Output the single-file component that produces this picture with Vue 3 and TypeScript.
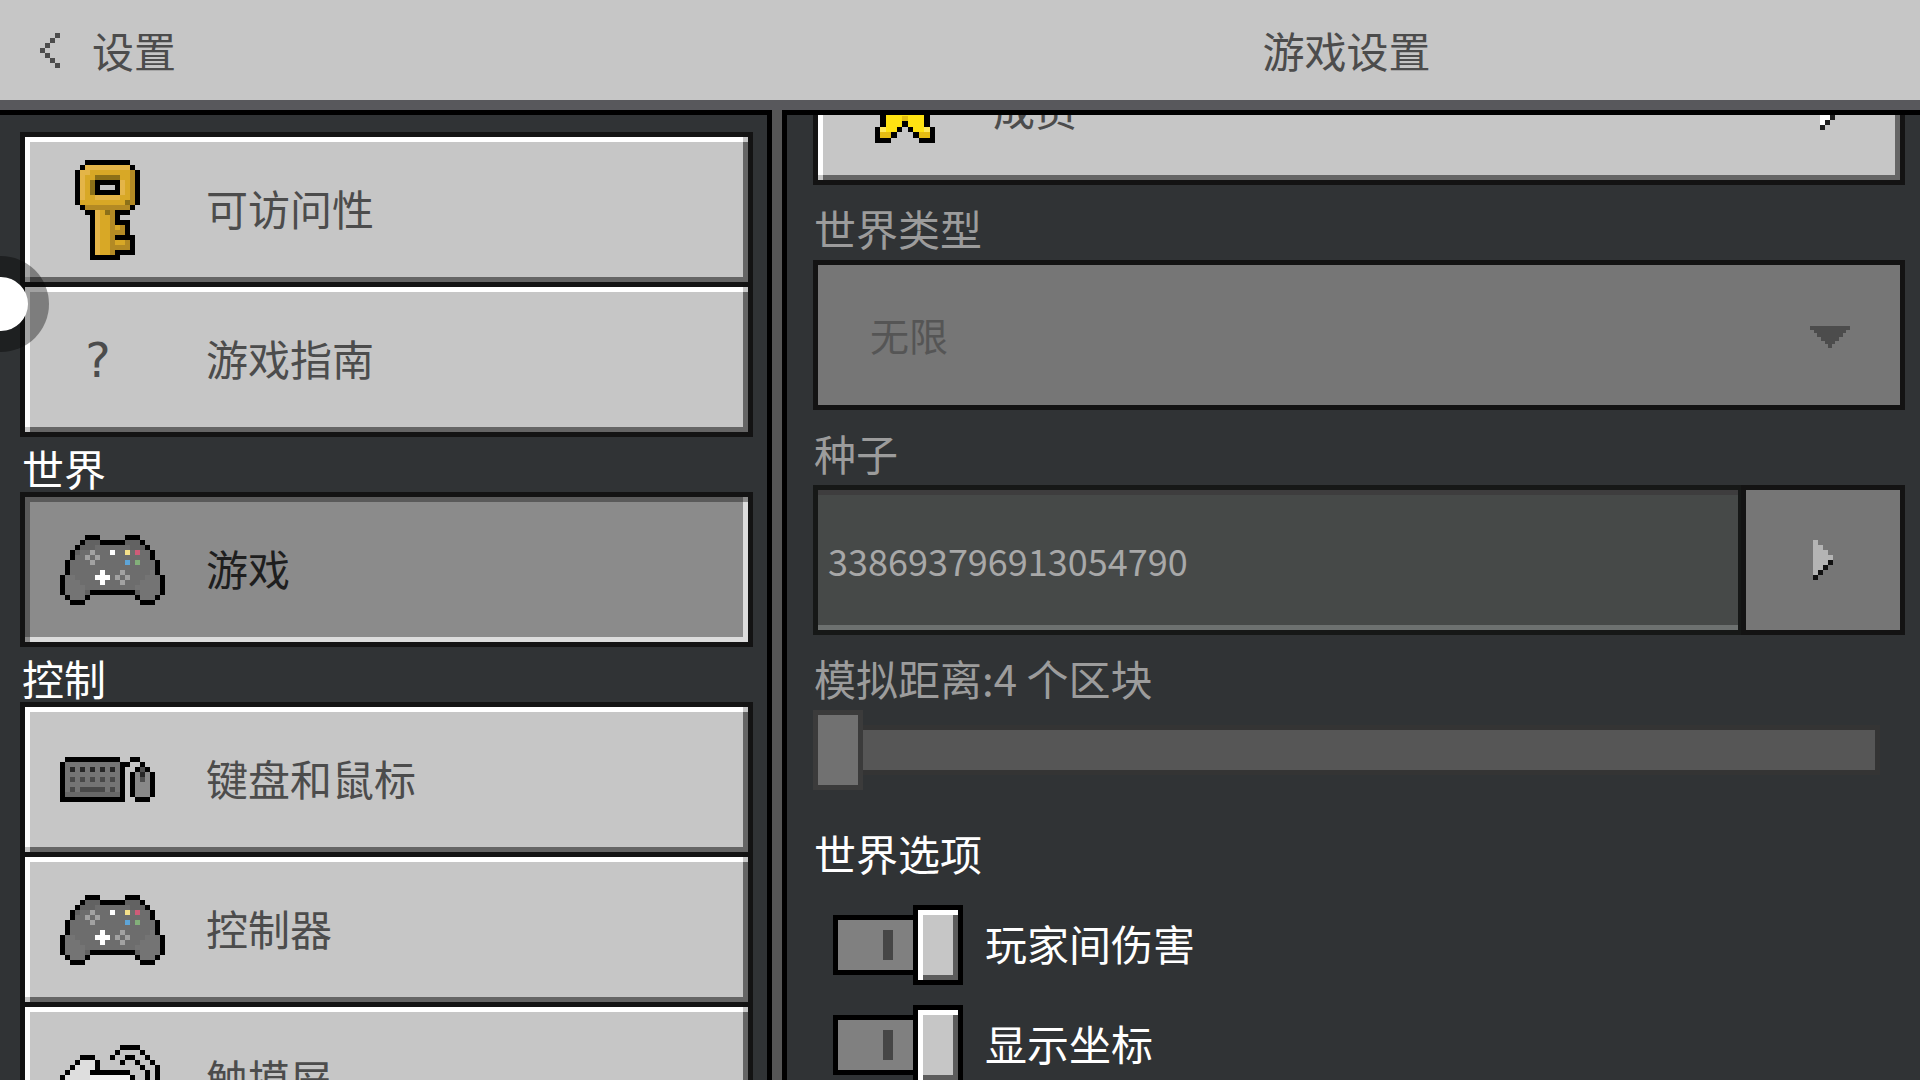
<script setup lang="ts">
import { ref } from 'vue'

interface Pixel { x: number; y: number; fill: string }
interface Sprite { width: number; height: number; pixels: Pixel[] }
interface MenuItem { label: string; icon?: Sprite; glyph?: string; selected?: boolean }
interface MenuGroup { title?: string; items: MenuItem[] }
interface Option { id: string; label: string; on: boolean }

// Builds a sprite from rows of palette letters; a dot is a clear pixel.
function sprite(rows: string[], palette: Record<string, string>): Sprite {
  const pixels: Pixel[] = []
  rows.forEach((row, y) => {
    ;[...row].forEach((c, x) => {
      if (palette[c]) pixels.push({ x, y, fill: palette[c] })
    })
  })
  return { width: Math.max(...rows.map(r => r.length)), height: rows.length, pixels }
}

const key = sprite([
  '.....KKKKKKKKK..',
  '....KLLLLLLLLLK.',
  '...KLLGGGGGGGGDK',
  '...KLGGBBBBBGGDK',
  '...KLGBKKKKKLGDK',
  '...KLGBK...KLGDK',
  '...KLGBKKKKKLGDK',
  '...KLGGLLLLLGGDK',
  '...KGGGGGGGGGBDK',
  '....KDDDDDDDDDK.',
  '.....KKLGBDKKK..',
  '......KLGGDK....',
  '......KLGGDKKK..',
  '......KLGGDGDK..',
  '......KLGGDDDK..',
  '......KLGGDKKKK.',
  '......KLGGDGGDK.',
  '......KLGGDDDDK.',
  '......KLGGDKKKK.',
  '......KKKKKK....',
], { K: '#000', L: '#e4b548', G: '#d8a826', D: '#b38a24', B: '#8c7018' })

const pad = sprite([
  '.....KKK.....KKK.....',
  '....KdddKKKKKdddK....',
  '...KdddgggggggdddK...',
  '..KdggagggWggYgRggK..',
  '..KggagaggggggggggK..',
  '.KggggaggggggBgGgggK.',
  '.KgggggggggggggggggK.',
  '.KggggggWgggagggggmK.',
  'KmmggggWWWgagagggmmmK',
  'KmmmggggWgggagggmmmmK',
  'KmmmmggggggggggmmmmmK',
  'KmmmmdKKKKKKKKKdmmmmK',
  '.KmmmK.........KmmmK.',
  '..KKK...........KKK..',
], {
  K: '#000', d: '#626262', g: '#6d6d6d', m: '#747474', a: '#a2a2a2', W: '#fff',
  Y: '#f5e08a', R: '#cf5c78', B: '#5ea5d8', G: '#83b07a',
})

const keyboard = sprite([
  '.KKKKKKKKKKK..KK...',
  'KgggggggggggKK..K..',
  'KgkgkgkgkgkgK..KdK.',
  'KgggggggggggK.KmkmK',
  'KgngngngngngK.KmdmK',
  'KgggggggggggK.KmmmK',
  'KgngnnnnngngK.KmmmK',
  'KhhhhhhhhhhhK.KmmmK',
  'KKKKKKKKKKKKK..KKK.',
], { K: '#000', g: '#747474', h: '#686868', k: '#262626', n: '#484848', m: '#888', d: '#4f4f4f' })

const touch = sprite([
  '............KKKK.....',
  '...........K....K....',
  '....KKK...K..KK..K...',
  '...KwwwK....K..K..K..',
  '..KwwwwK........K..K.',
  '.KwwwwKKKKKKKK...K.K.',
  'KwwwwwWWWWWWWWK..K.K.',
  'KwwwwwwwKKKKKK...K.K.',
  'KwwwwwwwwwwK.........',
  'KwwwwwwwwwwK.........',
  '.KwwwwwwwwK..........',
  '..KwwwwwwK...........',
  '...KKKKKK............',
  '.....................',
], { K: '#000', w: '#dedede', W: '#f2f2f2' })

const star = sprite([
  '....KKK....',
  '....KYK....',
  '...KYYYK...',
  'KKKKYYYKKKK',
  'KYYYYYYYYYK',
  '.KYYYYYYYK.',
  '.KYYYYYYYK.',
  '.KYYYDYYYK.',
  '.KYYYKYYYK.',
  'KLYYK.KYYLK',
  'KOOK...KOOK',
  'KKK.....KKK',
], { K: '#000', Y: '#ffe312', D: '#e3be12', L: '#ffe95c', O: '#e6bc12' })

const back = sprite(['...t', '..t.', '.t..', 't...', '.t..', '..t.', '...t'], { t: '#4c4c4c' })

const arrowRows = ['w...', 'ww..', 'www.', 'wwww', 'wwwk', 'wwk.', 'wk..', 'k...']
const arrow = sprite(arrowRows, { w: '#fff', k: '#1e1e1e' })
const arrowDim = sprite(arrowRows, { w: '#b4b4b4', k: '#111' })

const caret = sprite(
  ['ttttttttttt', '.ttttttttt.', '..ttttttt..', '...ttttt...', '....ttt....', '.....t.....'],
  { t: '#4c4c4c' },
)

const groups: MenuGroup[] = [
  { items: [{ label: '可访问性', icon: key }, { label: '游戏指南', glyph: '?' }] },
  { title: '世界', items: [{ label: '游戏', icon: pad, selected: true }] },
  {
    title: '控制',
    items: [
      { label: '键盘和鼠标', icon: keyboard },
      { label: '控制器', icon: pad },
      { label: '触摸屏', icon: touch },
    ],
  },
]

const seed = ref('338693796913054790')
const distance = ref(4)
const options = ref<Option[]>([
  { id: 'pvp', label: '玩家间伤害', on: true },
  { id: 'coordinates', label: '显示坐标', on: true },
])
</script>

<template>
  <div class="screen">
    <header class="topbar">
      <button class="back" type="button">
        <svg class="sprite" :width="back.width * 5" :height="back.height * 5" :viewBox="`0 0 ${back.width} ${back.height}`" aria-hidden="true">
          <rect v-for="(p, i) in back.pixels" :key="i" :x="p.x" :y="p.y" width="1" height="1" :fill="p.fill" />
        </svg>
        <span>设置</span>
      </button>
      <h1 class="title">游戏设置</h1>
    </header>

    <div class="body">
      <nav class="sidebar">
        <section v-for="(group, g) in groups" :key="g">
          <h2 v-if="group.title" class="group-title">{{ group.title }}</h2>
          <div class="frame">
            <button
              v-for="item in group.items"
              :key="item.label"
              type="button"
              class="item bevel"
              :class="{ selected: item.selected }"
            >
              <span class="icon">
                <svg
                  v-if="item.icon"
                  class="sprite"
                  :width="item.icon.width * 5"
                  :height="item.icon.height * 5"
                  :viewBox="`0 0 ${item.icon.width} ${item.icon.height}`"
                  aria-hidden="true"
                >
                  <rect v-for="(p, i) in item.icon.pixels" :key="i" :x="p.x" :y="p.y" width="1" height="1" :fill="p.fill" />
                </svg>
                <span v-else class="glyph">{{ item.glyph }}</span>
              </span>
              <span class="name">{{ item.label }}</span>
            </button>
          </div>
        </section>
      </nav>

      <div class="divider"></div>

      <main class="content">
        <div class="scrolled">
          <div class="frame">
            <button type="button" class="item bevel members">
              <svg class="sprite" width="60" height="65" :viewBox="`0 0 ${star.width} ${star.height}`" preserveAspectRatio="none" aria-hidden="true">
                <rect v-for="(p, i) in star.pixels" :key="i" :x="p.x" :y="p.y" width="1" height="1" :fill="p.fill" />
              </svg>
              <span class="name grow">成员</span>
              <svg class="sprite" width="20" height="40" viewBox="0 0 4 8" aria-hidden="true">
                <rect v-for="(p, i) in arrow.pixels" :key="i" :x="p.x" :y="p.y" width="1" height="1" :fill="p.fill" />
              </svg>
            </button>
          </div>

          <label class="label" for="world-type">世界类型</label>
          <div class="select-wrap">
            <select id="world-type" class="select" disabled>
              <option>无限</option>
            </select>
            <svg class="sprite caret" width="40" height="22" viewBox="0 0 11 6" preserveAspectRatio="none" aria-hidden="true">
              <rect v-for="(p, i) in caret.pixels" :key="i" :x="p.x" :y="p.y" width="1" height="1" :fill="p.fill" />
            </svg>
          </div>

          <label class="label" for="seed">种子</label>
          <div class="seed-row">
            <input id="seed" v-model="seed" class="seed" type="text" disabled />
            <button class="seed-button" type="button" disabled aria-labelledby="seed">
              <svg class="sprite" width="20" height="40" viewBox="0 0 4 8" aria-hidden="true">
                <rect v-for="(p, i) in arrowDim.pixels" :key="i" :x="p.x" :y="p.y" width="1" height="1" :fill="p.fill" />
              </svg>
            </button>
          </div>

          <label class="label" for="distance">模拟距离:{{ distance }} 个区块</label>
          <input id="distance" v-model.number="distance" class="slider" type="range" min="4" max="12" step="2" disabled />

          <h2 class="section-title">世界选项</h2>
          <div class="options">
            <div v-for="option in options" :key="option.id" class="option">
              <input :id="option.id" v-model="option.on" class="toggle" type="checkbox" />
              <label class="name" :for="option.id">{{ option.label }}</label>
            </div>
          </div>
        </div>
      </main>
    </div>

    <div class="touch-point"></div>
  </div>
</template>

<style>
html,
body {
  margin: 0;
  background: #303335;
}
</style>

<style scoped>
.screen {
  position: relative;
  display: flex;
  flex-direction: column;
  height: 100vh;
  overflow: hidden;
  background: #303335;
  color: #fff;
  font-family: 'Noto Sans CJK SC', sans-serif;
  font-size: 42px;
  line-height: 60px;
}

.screen * {
  box-sizing: border-box;
}

button,
input,
select {
  margin: 0;
  padding: 0;
  border: 0;
  border-radius: 0;
  font: inherit;
  color: inherit;
}

h1,
h2 {
  margin: 0;
  font-size: 42px;
  font-weight: 400;
}

.sprite {
  display: block;
  flex: none;
  shape-rendering: crispEdges;
}

.topbar {
  flex: none;
  display: grid;
  grid-template-columns: minmax(0, 787fr) minmax(0, 1133fr);
  align-items: center;
  height: 110px;
  border-bottom: 10px solid #58585c;
  background: #c6c6c6;
  color: #4c4c4c;
}

.back {
  display: flex;
  align-items: center;
  justify-self: start;
  gap: 32px;
  padding-left: 40px;
  background: none;
}

.title {
  padding-right: 14px;
  text-align: center;
}

.body {
  flex: 1;
  display: grid;
  grid-template-columns: minmax(0, 767fr) 20px minmax(0, 1133fr);
  min-height: 0;
}

.sidebar {
  padding: 17px 14px 0 20px;
  border-top: 5px solid #000;
  overflow: hidden;
}

.divider {
  border: solid #000;
  border-width: 0 5px;
  background: #565656;
}

.content {
  padding: 0 15px 0 26px;
  border-top: 5px solid #000;
  overflow: hidden;
}

/* The page is scrolled so that the first entry is partly hidden. */
.scrolled {
  margin-top: -85px;
}

.group-title {
  height: 55px;
  padding: 8px 0 0 2px;
  line-height: 45px;
}

.frame {
  display: grid;
  gap: 5px;
  padding: 5px;
  background: #131313;
}

.bevel {
  --face: #c6c6c6;
  --light: #fff;
  --shade: #656565;
  background:
    linear-gradient(var(--face), var(--face)) 0 100% / 5px 5px no-repeat,
    linear-gradient(var(--face), var(--face)) 100% 0 / 5px 5px no-repeat,
    linear-gradient(var(--light), var(--light)) 0 0 / 100% 5px no-repeat,
    linear-gradient(var(--light), var(--light)) 0 0 / 5px 100% no-repeat,
    linear-gradient(var(--shade), var(--shade)) 0 100% / 100% 5px no-repeat,
    linear-gradient(var(--shade), var(--shade)) 100% 0 / 5px 100% no-repeat,
    var(--face);
}

.item {
  display: flex;
  align-items: center;
  height: 145px;
  padding-left: 35px;
  color: #4c4c4c;
  text-align: left;
}

.item.selected {
  --face: #8b8b8b;
  --light: #5a5a5a;
  --shade: #dcdcdc;
  color: #1e1e1e;
}

.icon {
  flex: none;
  width: 146px;
}

.name {
  padding-bottom: 4px;
}

.glyph {
  display: block;
  width: 75px;
  font-family: 'DejaVu Sans Mono', monospace;
  font-size: 48px;
  text-align: center;
}

.members {
  gap: 58px;
  padding: 5px 60px 0 57px;
}

.grow {
  flex: 1;
}

.label {
  display: block;
  padding: 13px 0 2px 1px;
  color: #9c9c9c;
}

.select-wrap {
  position: relative;
}

.select {
  display: block;
  width: 100%;
  height: 150px;
  padding: 0 0 2px 52px;
  border: 5px solid #131313;
  appearance: none;
  background: #767676;
  color: #555;
  font-size: 39px;
  opacity: 1;
}

.caret {
  position: absolute;
  top: 66px;
  right: 55px;
}

.seed-row {
  display: flex;
  height: 150px;
}

.seed {
  flex: 1;
  min-width: 0;
  padding-left: 10px;
  border: 5px solid #161817;
  border-right-width: 3px;
  background: #464948;
  box-shadow: inset 0 5px #3e3d3e, inset 0 -5px #6d7170;
  color: #a8a8a8;
  font-size: 36px;
}

.seed-button {
  display: grid;
  place-items: center;
  width: 164px;
  border: 5px solid #131313;
  background: #767676;
}

.slider {
  display: block;
  width: calc(100% - 25px);
  height: 80px;
  appearance: none;
  background: none;
}

.slider::-webkit-slider-runnable-track {
  box-sizing: border-box;
  height: 50px;
  border: 5px solid #343434;
  border-left: 0;
  background: #565656;
}

.slider::-webkit-slider-thumb {
  box-sizing: border-box;
  width: 50px;
  height: 80px;
  margin-top: -20px;
  border: 5px solid #3b3b3b;
  appearance: none;
  background: #717171;
}

.section-title {
  padding: 33px 0 22px 1px;
}

.options {
  display: grid;
  gap: 20px;
  padding-left: 20px;
}

.option {
  display: flex;
  align-items: center;
  gap: 22px;
}

.toggle {
  display: flex;
  align-items: center;
  flex: none;
  width: 130px;
  height: 80px;
  appearance: none;
}

.toggle::before {
  content: '';
  box-sizing: border-box;
  width: 80px;
  height: 60px;
  border: 5px solid #000;
  border-right: 0;
  background: linear-gradient(#464646, #464646) 45px 10px / 10px 30px no-repeat #808080;
}

.toggle::after {
  content: '';
  box-sizing: border-box;
  width: 50px;
  height: 80px;
  border: 5px solid #000;
  background: #c6c6c6;
  box-shadow: inset 5px 5px #fff, inset -5px -5px #5c5c5c;
}

.toggle:not(:checked)::before {
  order: 1;
}

.touch-point {
  position: absolute;
  top: 256px;
  left: -47px;
  width: 96px;
  height: 96px;
  border: 21px solid rgb(0 0 0 / 37%);
  border-radius: 50%;
  background: #fff;
  background-clip: padding-box;
  pointer-events: none;
}
</style>
